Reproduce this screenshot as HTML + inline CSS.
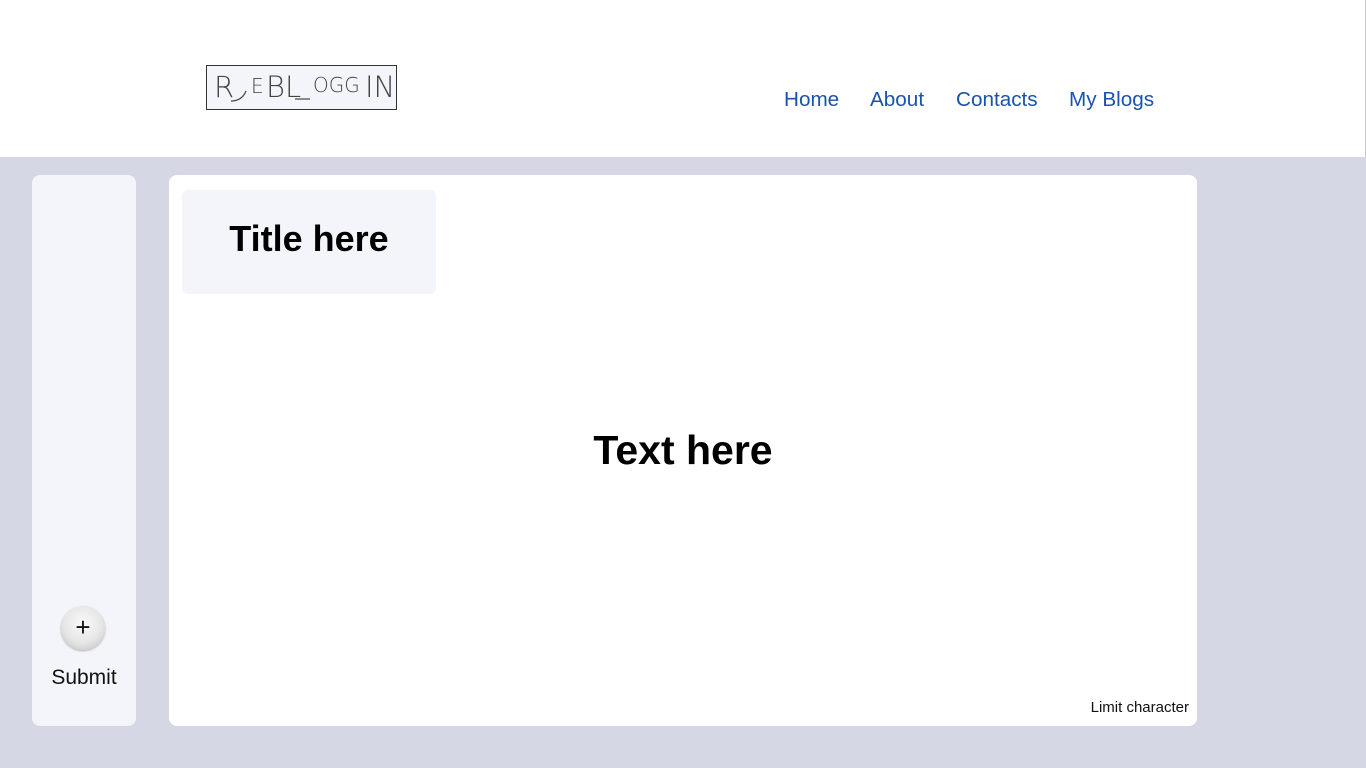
<!DOCTYPE html>
<html><head><meta charset="utf-8"><style>
body{margin:0;width:1366px;height:768px;background:#d5d8e4;font-family:"Liberation Sans",sans-serif;position:relative;overflow:hidden}
.hdr{position:absolute;left:0;top:0;width:1365px;height:157px;background:#fff;border-right:1px solid #c8c8c8}
.logo{position:absolute;left:206px;top:65px;width:189px;height:43px;border:1px solid #333;background:#f4f5fa;font-family:"DejaVu Sans",sans-serif;font-weight:200;color:#444;white-space:nowrap}
.logo span{position:absolute}
.nav{position:absolute;top:88px;font-size:20.7px;color:#1a52b0}
.side{position:absolute;left:32px;top:175px;width:104px;height:551px;background:#f4f5fa;border-radius:8px}
.btn{position:absolute;left:29px;top:431px;width:44px;height:44px;border-radius:50%;background:radial-gradient(circle at 50% 40%,#fafafa 0%,#e6e6e6 55%,#bdbdbd 100%);box-shadow:0 1px 2px rgba(0,0,0,.3);text-align:center;line-height:42px;font-size:26px;color:#111}
.sub{position:absolute;left:0;width:104px;top:491px;text-align:center;font-size:21px;color:#111}
.main{position:absolute;left:169px;top:175px;width:1028px;height:551px;background:#fff;border-radius:8px}
.title{position:absolute;left:13px;top:15px;width:254px;height:104px;background:#f4f5fa;border-radius:6px;text-align:center;line-height:98px;font-size:36px;font-weight:bold;color:#000}
.text{position:absolute;left:0;width:1028px;top:252px;text-align:center;font-size:41px;font-weight:bold;color:#000}
.lim{position:absolute;right:8px;bottom:10px;font-size:15px;color:#111}
</style></head><body>
<div class="hdr">
<div class="logo">
<span style="left:7px;top:4px;font-size:29px">R</span>
<svg style="position:absolute;left:23px;top:22px" width="18" height="14"><path d="M1 13 Q12 13 16 3" stroke="#444" fill="none" stroke-width="1.2"/></svg>
<span style="left:44px;top:8px;font-size:20px">E</span>
<span style="left:59px;top:4px;font-size:29px">BL</span>
<svg style="position:absolute;left:88px;top:30px" width="16" height="4"><path d="M0 3 H15" stroke="#444" stroke-width="1.2"/></svg>
<span style="left:106px;top:7px;font-size:20px">OGG</span>
<span style="left:158px;top:4px;font-size:29px">IN</span>
</div>
<span class="nav" style="left:784px">Home</span>
<span class="nav" style="left:870px">About</span>
<span class="nav" style="left:956px">Contacts</span>
<span class="nav" style="left:1069px">My Blogs</span>
</div>
<div class="side"><div class="btn">+</div><div class="sub">Submit</div></div>
<div class="main">
<div class="title">Title here</div>
<div class="text">Text here</div>
<div class="lim">Limit character</div>
</div>
</body></html>
